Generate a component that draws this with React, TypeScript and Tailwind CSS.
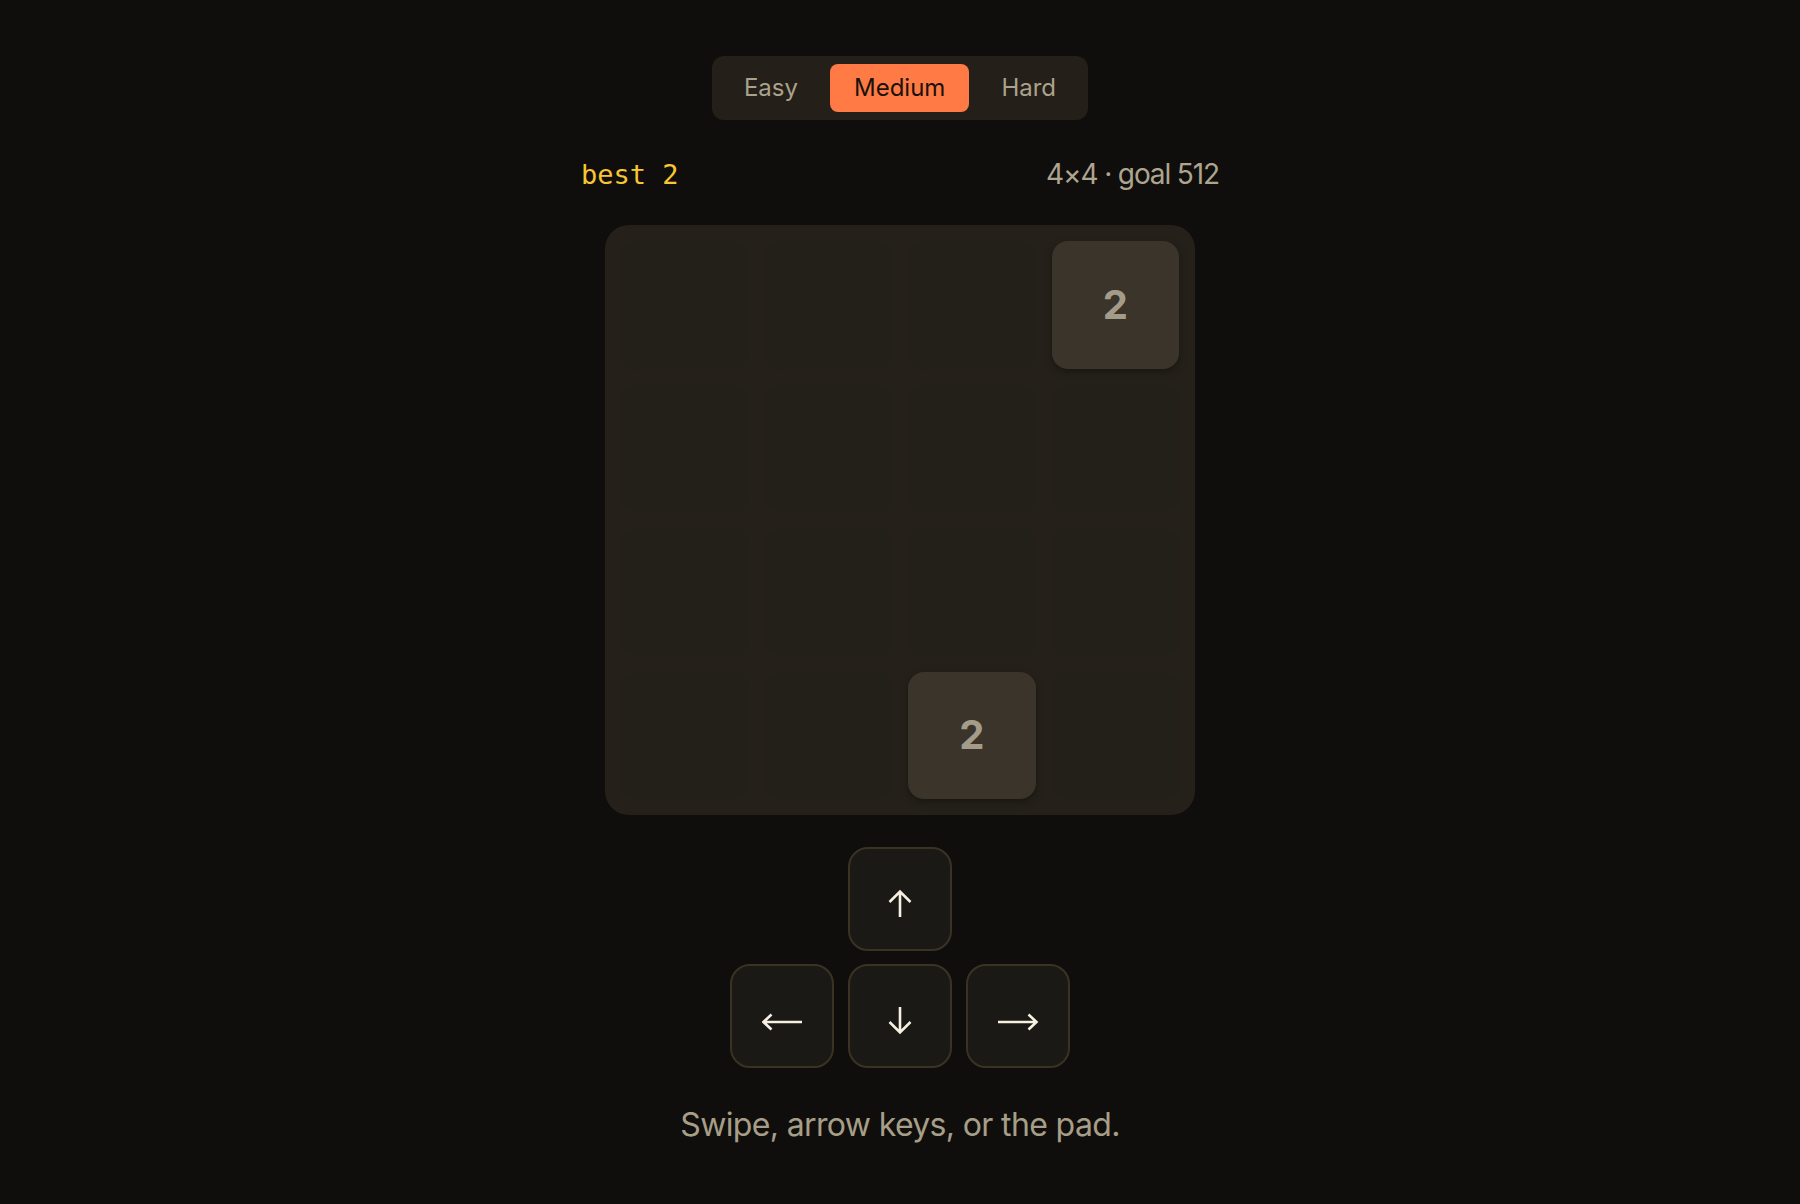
import { useState } from "react";

type Dir = "up" | "down" | "left" | "right";

const LEVELS = ["Easy", "Medium", "Hard"];

// 4x4 grid, 0 = empty
const CELLS = [
  0, 0, 0, 2,
  0, 0, 0, 0,
  0, 0, 0, 0,
  0, 0, 2, 0,
];

function Arrow({ dir }: { dir: Dir }) {
  if (dir === "up" || dir === "down") {
    const d =
      dir === "up"
        ? "M12 3 V28 M1.5 13 L12 2.5 L22.5 13"
        : "M12 1 V26 M1.5 16 L12 26.5 L22.5 16";
    return (
      <svg width="24" height="29" viewBox="0 0 24 29" fill="none" className="mt-[9px]">
        <path d={d} stroke="#f6f0e2" strokeWidth="2.6" strokeLinecap="butt" strokeLinejoin="miter" />
      </svg>
    );
  }
  const d =
    dir === "left"
      ? "M1.5 9 H40 M9.5 1.5 L1.5 9 L9.5 16.5"
      : "M0 9 H38.5 M30.5 1.5 L38.5 9 L30.5 16.5";
  return (
    <svg width="41" height="18" viewBox="0 0 41 18" fill="none" className="mt-[11px]">
      <path d={d} stroke="#f6f0e2" strokeWidth="2.6" strokeLinecap="butt" strokeLinejoin="miter" />
    </svg>
  );
}

function PadButton({ dir, className = "" }: { dir: Dir; className?: string }) {
  return (
    <button
      aria-label={dir}
      className={`w-[104px] h-[104px] rounded-[20px] border-2 border-[#3a3324] bg-[#1a1915] flex items-center justify-center ${className}`}
    >
      <Arrow dir={dir} />
    </button>
  );
}

export default function App() {
  const [level, setLevel] = useState("Medium");

  return (
    <div
      className="min-h-screen w-full bg-[#0f0e0c] flex flex-col items-center"
      style={{ fontFamily: "Inter, 'Noto Sans', sans-serif" }}
    >
      {/* ── Dificultad ─────────────────────────────── */}
      <div className="mt-[56px] flex gap-2 p-2 bg-[#241f18] rounded-xl">
        {LEVELS.map((l) => (
          <button
            key={l}
            onClick={() => setLevel(l)}
            className={
              l === level
                ? "h-12 px-6 rounded-lg bg-[#ff7a45] text-[#1a120b] text-[24px] leading-none"
                : "h-12 px-6 rounded-lg text-[#aba28d] text-[24px] leading-none"
            }
          >
            {l}
          </button>
        ))}
      </div>

      {/* ── Marcador ───────────────────────────────── */}
      <div className="mt-[34px] w-[638px] flex items-center justify-between h-[40px]">
        <span
          className="text-[27px] text-[#f8c630] leading-none"
          style={{ fontFamily: "'DejaVu Sans Mono', 'Liberation Mono', monospace" }}
        >
          best 2
        </span>
        <span className="text-[28px] text-[#aea58f] tracking-[-0.04em] leading-none">
          4×4 · goal 512
        </span>
      </div>

      {/* ── Tablero ────────────────────────────────── */}
      <div className="mt-[31px] w-[590px] h-[590px] p-4 rounded-3xl bg-[#25211a] grid grid-cols-4 grid-rows-4 gap-4">
        {CELLS.map((v, i) =>
          v ? (
            <div
              key={i}
              className="rounded-2xl bg-[#3b342a] flex items-center justify-center shadow-[0_3px_8px_rgba(0,0,0,0.35)]"
            >
              <span className="text-[40px] font-bold text-[#a49c89] leading-none">{v}</span>
            </div>
          ) : (
            <div key={i} className="rounded-2xl bg-[#231f19]" />
          )
        )}
      </div>

      {/* ── Pad ────────────────────────────────────── */}
      <div className="mt-[32px] grid grid-cols-[104px_104px_104px] gap-x-[14px] gap-y-[13px]">
        <PadButton dir="up" className="col-start-2" />
        <PadButton dir="left" className="col-start-1" />
        <PadButton dir="down" />
        <PadButton dir="right" />
      </div>

      <p className="mt-[41px] text-[32px] text-[#a79e87] tracking-[-0.02em] leading-none">
        Swipe, arrow keys, or the pad.
      </p>
    </div>
  );
}
